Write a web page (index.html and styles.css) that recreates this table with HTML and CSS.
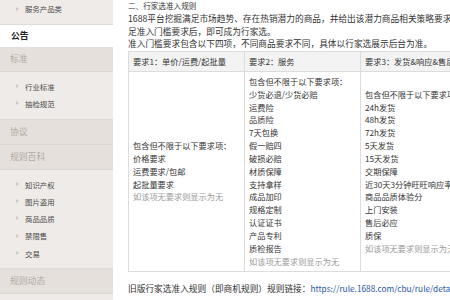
FILE: index.html
```html
<!DOCTYPE html>
<html lang="zh-CN">
<head>
<meta charset="utf-8">
<title>行家选准入规则</title>
<link rel="stylesheet" href="styles.css">
</head>
<body>
<div class="page">
  <aside class="side">
    <ul class="sub sub-top">
      <li>服务产品类</li>
    </ul>
    <div class="cat active">公告</div>
    <div class="cat">标准</div>
    <ul class="sub">
      <li>行业标准</li>
      <li>抽检规范</li>
    </ul>
    <div class="cat">协议</div>
    <div class="cat">规则百科</div>
    <ul class="sub">
      <li>知识产权</li>
      <li>图片盗用</li>
      <li>商品品质</li>
      <li>禁限售</li>
      <li>交易</li>
    </ul>
    <div class="cat">规则动态</div>
    <ul class="sub">
      <li>规则变更</li>
    </ul>
  </aside>
  <main class="content">
    <p class="heading">二、行家选准入规则</p>
    <p class="para">1688平台挖掘满足市场趋势、存在热销潜力的商品，并给出该潜力商品相关策略要求，商家满<br>足准入门槛要求后，即可成为行家选。<br>准入门槛要求包含以下四项，不同商品要求不同，具体以行家选展示后台为准。</p>
    <table class="rules">
      <colgroup>
        <col class="c1"><col class="c2"><col class="c3">
      </colgroup>
      <thead>
        <tr>
          <th>要求1：单价/运费/起批量</th>
          <th>要求2：服务</th>
          <th>要求3：发货&amp;响应&amp;售后</th>
        </tr>
      </thead>
      <tbody>
        <tr>
          <td>包含但不限于以下要求项：<br>价格要求<br>运费要求/包邮<br>起批量要求<br><span class="muted">如该项无要求则显示为无</span></td>
          <td>包含但不限于以下要求项：<br>少货必退/少货必赔<br>运费险<br>品质险<br>7天包换<br>假一赔四<br>破损必赔<br>材质保障<br>支持拿样<br>成品加印<br>规格定制<br>认证证书<br>产品专利<br>质检报告<br><span class="muted">如该项无要求则显示为无</span></td>
          <td>包含但不限于以下要求项：<br>24h发货<br>48h发货<br>72h发货<br>5天发货<br>15天发货<br>交期保障<br>近30天3分钟旺旺响应率<br>商品品质体验分<br>上门安装<br>售后必应<br>质保<br><span class="muted">如该项无要求则显示为无</span></td>
        </tr>
      </tbody>
    </table>
    <p class="para link-line">旧版行家选准入规则（即商机规则）规则链接：<a class="link" href="#">https://rule.1688.com/cbu/rule/detail/1234.html</a></p>
  </main>
</div>
</body>
</html>
```

FILE: styles.css
```css
* { box-sizing: border-box; }
html, body {
  margin: 0;
  padding: 0;
  width: 450px;
  height: 300px;
  overflow: hidden;
  background: #fff;
  font-family: "Noto Sans CJK SC", "Microsoft YaHei", sans-serif;
  color: #333;
}
.page {
  display: flex;
  width: 450px;
  height: 300px;
  overflow: hidden;
}
.side {
  flex: 0 0 113px;
  width: 113px;
  background: #efebe8;
}
.sub {
  list-style: none;
  margin: 0;
  padding: 6px 0;
  border-bottom: 1px solid #e0dad4;
}
.sub-top {
  padding-top: 0;
}
.sub li {
  position: relative;
  height: 17.3px;
  line-height: 17.3px;
  padding-left: 25px;
  font-size: 7.4px;
  color: #4a4a4a;
  white-space: nowrap;
}
.sub-top li { height: 18px; line-height: 18px; }
.sub li::before {
  content: "";
  position: absolute;
  left: 16px;
  top: 50%;
  margin-top: -2.5px;
  border-left: 3px solid #cfc9c3;
  border-top: 2.5px solid transparent;
  border-bottom: 2.5px solid transparent;
}
.cat {
  height: 25px;
  line-height: 24px;
  padding-left: 10px;
  font-size: 8.8px;
  color: #b3aba3;
  background: #e5e0db;
  border-bottom: 1px solid #dcd6d0;
}
.cat.active {
  height: 22px;
  line-height: 22px;
  background: #fff;
  color: #222;
  font-weight: bold;
  padding-left: 11px;
  border-bottom: 0;
}
.content {
  flex: 0 0 auto;
  padding-left: 15px;
  min-width: 0;
}
.heading {
  margin: 0;
  font-size: 7.6px;
  line-height: 12.75px;
  white-space: nowrap;
}
.para {
  margin: 0;
  font-size: 8.7px;
  line-height: 12.75px;
  white-space: nowrap;
}
.rules {
  border-collapse: collapse;
  table-layout: fixed;
  width: 380px;
  font-size: 8.2px;
  line-height: 12.85px;
  margin-top: 0;
}
.rules col.c1 { width: 116px; }
.rules col.c2 { width: 116px; }
.rules col.c3 { width: 148px; }
.rules th, .rules td {
  border: 1px solid #dcdcdc;
  padding: 3px 4px;
  text-align: left;
  font-weight: normal;
  white-space: nowrap;
  overflow: hidden;
}
.rules th {
  background: #f3f3f3;
}
.rules td {
  vertical-align: middle;
}
.muted { color: #9a9a9a; }
.link-line {
  margin-top: 10px;
}
.link {
  color: #2a5aa8;
  text-decoration: none;
  font-size: 8.3px;
}
```
